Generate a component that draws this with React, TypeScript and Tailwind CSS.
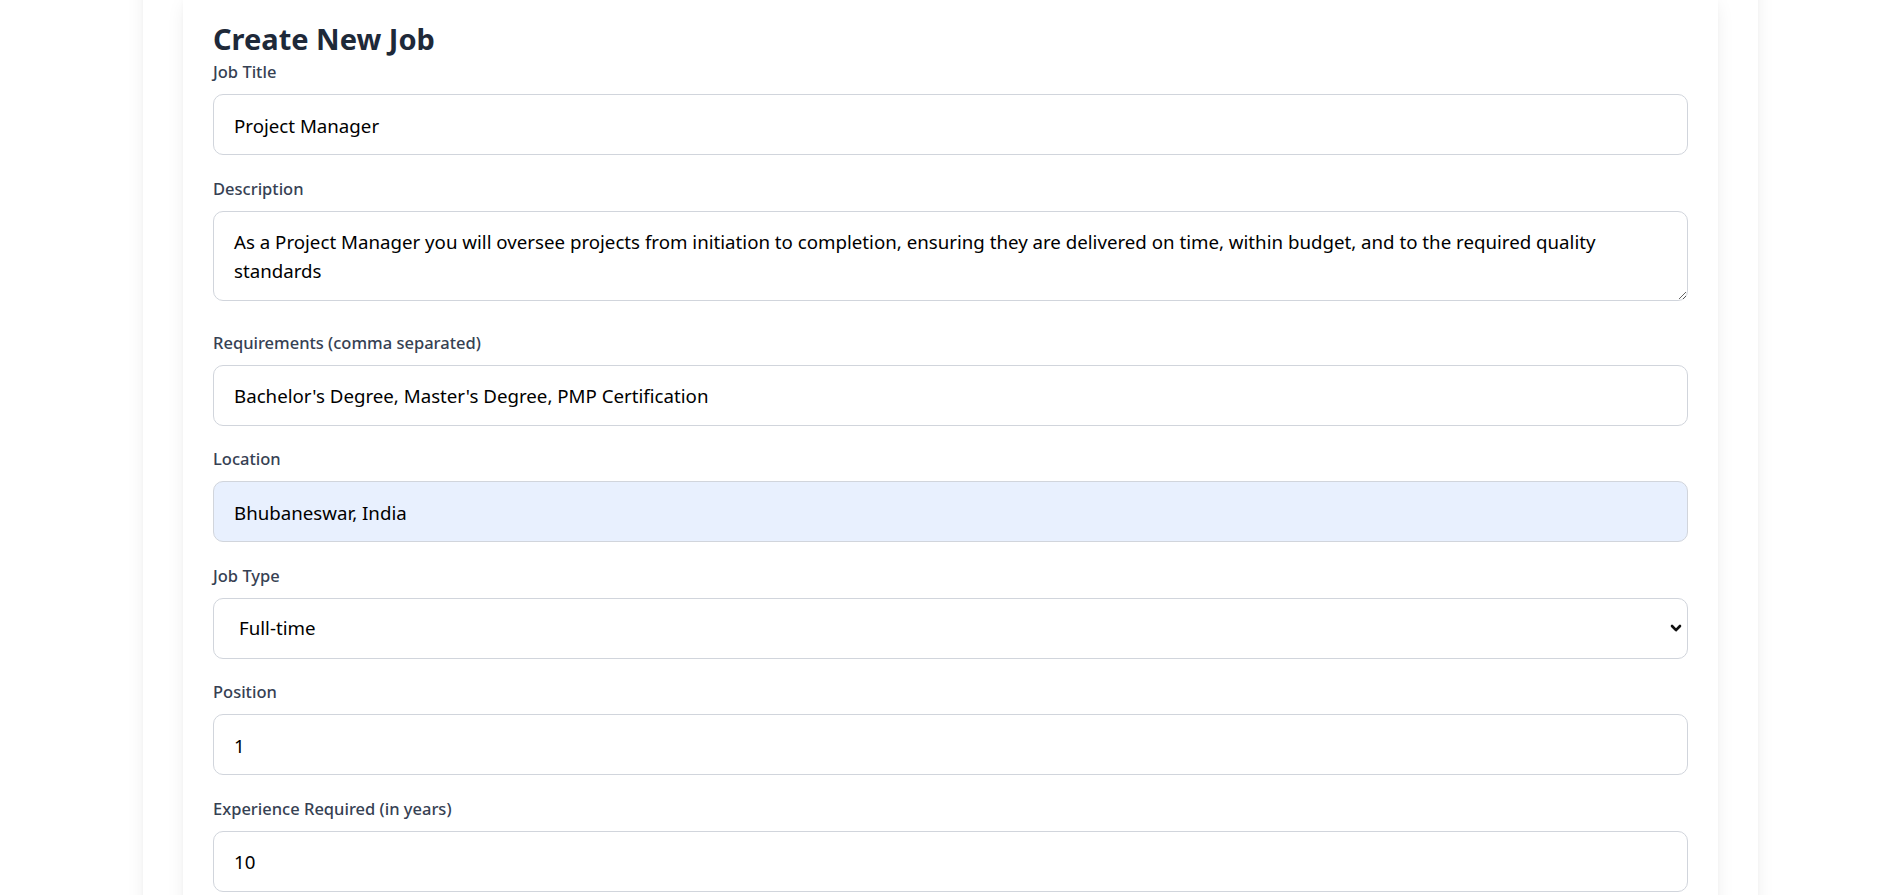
import React from "react";

const shadowLg =
  "shadow-[0_12px_19px_-4px_rgba(0,0,0,0.1),0_5px_8px_-5px_rgba(0,0,0,0.1)]";

function Label({ children }: { children: React.ReactNode }) {
  return (
    <label className="mb-[10px] block text-[16.5px] font-medium leading-[25px] text-gray-700">
      {children}
    </label>
  );
}

function TextField({ label, value, autofill }: { label: string; value: string; autofill?: boolean }) {
  return (
    <div className="mb-[20.5px]">
      <Label>{label}</Label>
      <input
        type="text"
        defaultValue={value}
        className={`block h-[61px] w-full rounded-[10px] border border-gray-300 px-[20px] pt-[1px] text-[18.7px] text-black outline-none ${
          autofill ? "bg-[#e8f0fe]" : "bg-white"
        }`}
      />
    </div>
  );
}

export default function App() {
  return (
    <div className="h-[895px] overflow-hidden bg-white font-['Noto_Sans',sans-serif]">
      <div className={`ml-[143px] mt-[-40px] w-[1615px] bg-white px-[40px] pt-[29px] ${shadowLg}`}>
        <div className={`bg-white px-[30px] pt-[30px] pb-[40px] ${shadowLg}`}>
          <h1 className="text-[29px] font-bold leading-[40px] text-gray-800">Create New Job</h1>
          <form>
            <TextField label="Job Title" value="Project Manager" />

            <div className="mb-[29px]">
              <Label>Description</Label>
              <textarea
                rows={2}
                defaultValue="As a Project Manager you will oversee projects from initiation to completion, ensuring they are delivered on time, within budget, and to the required quality standards"
                className="block h-[90px] w-full rounded-[10px] border border-gray-300 bg-white px-[20px] pt-[15px] pb-[13px] text-[18.7px] leading-[29px] text-black outline-none"
              />
            </div>

            <TextField
              label="Requirements (comma separated)"
              value="Bachelor's Degree, Master's Degree, PMP Certification"
            />
            <TextField label="Location" value="Bhubaneswar, India" autofill />

            <div className="mb-[20.5px]">
              <Label>Job Type</Label>
              <div className="relative">
                <select
                  defaultValue="Full-time"
                  className="block h-[61px] w-full appearance-none rounded-[10px] border border-gray-300 bg-white pl-[25px] pt-[1px] text-[18.7px] text-black outline-none"
                >
                  <option>Full-time</option>
                  <option>Part-time</option>
                  <option>Contract</option>
                  <option>Internship</option>
                </select>
                <svg
                  className="pointer-events-none absolute right-[6px] top-[26px] h-[9px] w-[12px]"
                  viewBox="0 0 12 9"
                  fill="none"
                  stroke="#111"
                  strokeWidth="2.6"
                  strokeLinecap="round"
                  strokeLinejoin="round"
                >
                  <path d="M2 2 6 6.2 10 2" />
                </svg>
              </div>
            </div>

            <TextField label="Position" value="1" />
            <TextField label="Experience Required (in years)" value="10" />
            <TextField label="Salary (LPA)" value="18" />
          </form>
        </div>
      </div>
    </div>
  );
}
